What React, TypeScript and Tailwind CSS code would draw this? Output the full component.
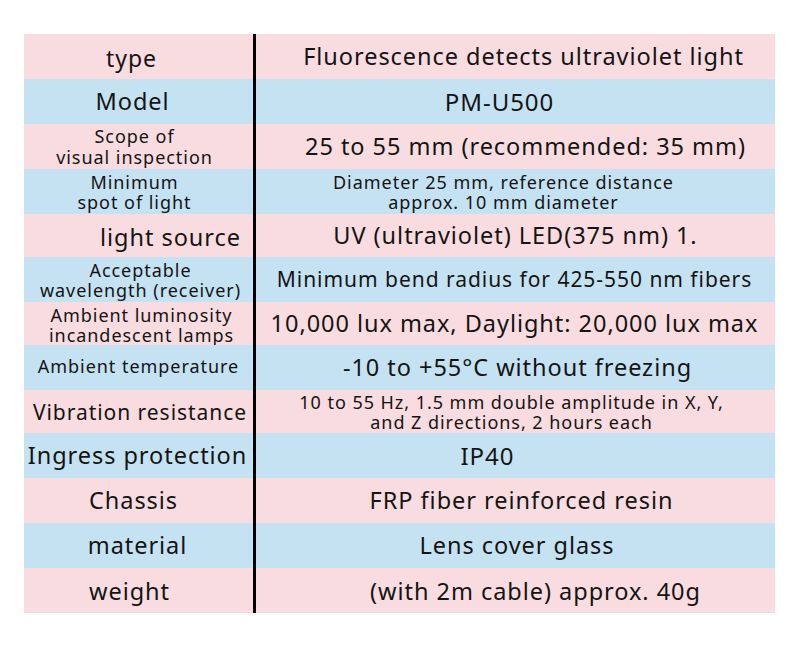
import React from 'react';

type Row = {
  label: string[];
  labelCls: string;
  value: string[];
  valueCls: string;
  bg: string;
  h: string;
};

const PINK = 'bg-[#f8dcdf]';
const BLUE = 'bg-[#c5e2f2]';

// spec rows, colours alternate pink / blue
const rows: Row[] = [
  { label: ['type'], labelCls: 'text-[23px] pr-[14px] pt-[4px]', value: ['Fluorescence detects ultraviolet light'], valueCls: 'text-[23.5px] pl-[16px]', bg: PINK, h: 'h-[45px]' },
  { label: ['Model'], labelCls: 'text-[23.5px] pr-[12px]', value: ['PM-U500'], valueCls: 'text-[24px] pr-[32px]', bg: BLUE, h: 'h-[45px]' },
  { label: ['Scope of', 'visual inspection'], labelCls: 'text-[18px] leading-[21px] pr-[8px]', value: ['25 to 55 mm (recommended: 35 mm)'], valueCls: 'text-[23.5px] pl-[20px]', bg: PINK, h: 'h-[45px]' },
  { label: ['Minimum', 'spot of light'], labelCls: 'text-[18px] leading-[20px] pr-[8px]', value: ['Diameter 25 mm, reference distance', 'approx. 10 mm diameter'], valueCls: 'text-[18px] leading-[20px] pr-[24px]', bg: BLUE, h: 'h-[45px]' },
  { label: ['light source'], labelCls: 'text-[23.5px] pl-[64px] pt-[4px]', value: ['UV (ultraviolet) LED(375 nm) 1.'], valueCls: 'text-[23.5px]', bg: PINK, h: 'h-[43px]' },
  { label: ['Acceptable', 'wavelength (receiver)'], labelCls: 'text-[18px] leading-[20px] pl-[4px]', value: ['Minimum bend radius for 425-550 nm fibers'], valueCls: 'text-[21px] pr-[2px]', bg: BLUE, h: 'h-[45px]' },
  { label: ['Ambient luminosity', 'incandescent lamps'], labelCls: 'text-[18px] leading-[20px] pl-[6px] pt-[3px]', value: ['10,000 lux max, Daylight: 20,000 lux max'], valueCls: 'text-[23.5px] pr-[2px]', bg: PINK, h: 'h-[43px]' },
  { label: ['Ambient temperature'], labelCls: 'text-[18px] pb-[2px]', value: ['-10 to +55°C without freezing'], valueCls: 'text-[23.5px] pl-[4px]', bg: BLUE, h: 'h-[45px]' },
  { label: ['Vibration resistance'], labelCls: 'text-[21px] pl-[3px] pt-[2px]', value: ['10 to 55 Hz, 1.5 mm double amplitude in X, Y,', 'and Z directions, 2 hours each'], valueCls: 'text-[18px] leading-[20px] pr-[8px]', bg: PINK, h: 'h-[43px]' },
  { label: ['Ingress protection'], labelCls: 'text-[23.5px] pr-[2px]', value: ['IP40'], valueCls: 'text-[24px] pr-[56px]', bg: BLUE, h: 'h-[45px]' },
  { label: ['Chassis'], labelCls: 'text-[23.5px] pr-[10px]', value: ['FRP fiber reinforced resin'], valueCls: 'text-[23.5px] pl-[12px]', bg: PINK, h: 'h-[45px]' },
  { label: ['material'], labelCls: 'text-[23.5px] pr-[2px]', value: ['Lens cover glass'], valueCls: 'text-[23.5px] pl-[3px]', bg: BLUE, h: 'h-[45px]' },
  { label: ['weight'], labelCls: 'text-[23.5px] pr-[18px] pt-[3px]', value: ['(with 2m cable) approx. 40g'], valueCls: 'text-[23.5px] pl-[40px] pt-[3px]', bg: PINK, h: 'h-[45px]' },
];

export default function App() {
  return (
    <div className="w-[800px] h-[650px] bg-white pt-[34px] pl-[24px] text-[#141414] tracking-[0.06em] font-['Noto_Sans','Open_Sans',sans-serif]">
      <div className="w-[751px] flex flex-col">
        {rows.map((r, i) => (
          <div key={i} className={`flex ${r.h} ${r.bg}`}>
            <div className={`w-[229px] flex flex-col items-center justify-center text-center whitespace-nowrap ${r.labelCls}`}>
              {r.label.map((t, j) => <span key={j}>{t}</span>)}
            </div>
            <div className="w-[3px] bg-black" />
            <div className={`flex-1 flex flex-col items-center justify-center text-center whitespace-nowrap ${r.valueCls}`}>
              {r.value.map((t, j) => <span key={j}>{t}</span>)}
            </div>
          </div>
        ))}
      </div>
    </div>
  );
}
